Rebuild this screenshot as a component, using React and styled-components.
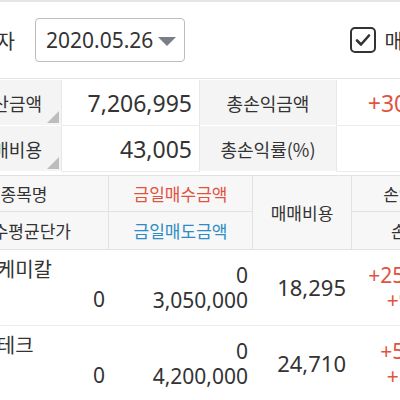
import styled, { createGlobalStyle } from "styled-components";

const Global = createGlobalStyle`
  html, body { margin: 0; padding: 0; background: #fff; overflow: hidden; }
  body { font-family: "Noto Sans", "Noto Sans CJK KR", sans-serif; color: #333; }
`;

const RED = "#e2533f";
const BLUE = "#2c8cc6";
const KR = `"Noto Sans CJK KR", "Noto Sans", sans-serif`;

const Page = styled.div`
  width: 540px;
  margin-left: -60px;
  border-top: 2px solid #e6e6e6;
`;

const Toolbar = styled.div`
  height: 76px;
  display: flex;
  align-items: center;
  border-bottom: 1px solid #e4e4e4;
  padding-left: 38px;
`;

const ToolLabel = styled.span`
  font-size: 20px;
  width: 57px;
`;

const DateSelect = styled.div`
  width: 150px;
  height: 44px;
  box-sizing: border-box;
  border: 1px solid #bdbdbd;
  border-radius: 4px;
  display: flex;
  align-items: center;
  padding-left: 10px;
  font-size: 21px;
  gap: 5px;
`;

const Caret = styled.span`
  width: 0;
  height: 0;
  border-left: 9px solid transparent;
  border-right: 9px solid transparent;
  border-top: 9px solid #7a7f87;
  margin-top: 2px;
`;

const CheckWrap = styled.label`
  margin-left: auto;
  margin-right: 22px;
  display: flex;
  align-items: center;
  gap: 8px;
  font-size: 20px;
`;

const CheckBox = styled.span`
  width: 26px;
  height: 26px;
  box-sizing: border-box;
  border: 2px solid #333;
  border-radius: 5px;
  display: flex;
  align-items: center;
  justify-content: center;
`;

const Summary = styled.div`
  display: grid;
  grid-template-columns: 122px 138px 137px 137px;
  margin-top: 1px;
`;

const SumLabel = styled.div`
  position: relative;
  background: #f4f4f4;
  height: 45px;
  display: flex;
  align-items: center;
  justify-content: ${(p) => (p.$right ? "flex-end" : "center")};
  padding-right: ${(p) => (p.$right ? "19px" : "0")};
  font-family: ${KR};
  font-size: 18px;
  border-bottom: 1px solid #fff;
  border-right: 1px solid #e8e8e8;
  ${(p) =>
    p.$corner &&
    `&::after {
      content: "";
      position: absolute;
      right: 2px;
      bottom: 2px;
      border-left: 12px solid transparent;
      border-bottom: 12px solid #bdbdbd;
    }`}
`;

const SumValue = styled.div`
  height: 45px;
  display: flex;
  align-items: center;
  justify-content: flex-end;
  padding-right: 7px;
  font-size: 23px;
  color: ${(p) => p.$color || "#333"};
  border-bottom: 1px solid #ececec;
  border-right: 1px solid #e8e8e8;
`;

const Table = styled.div`
  margin-top: 3px;
`;

const Head = styled.div`
  display: grid;
  grid-template-columns: 169px 144px 99px 126px;
  grid-template-rows: 36px 37px;
  background: #f7f7f7;
  border-top: 1px solid #e2e2e2;
  border-bottom: 1px solid #e2e2e2;
`;

const HeadCell = styled.div`
  display: flex;
  align-items: center;
  justify-content: center;
  font-family: ${KR};
  font-size: 17px;
  color: ${(p) => p.$color || "#333"};
  border-right: 1px solid #e2e2e2;
  border-bottom: ${(p) => (p.$top ? "1px solid #e2e2e2" : "none")};
  grid-column: ${(p) => p.$col};
  grid-row: ${(p) => p.$row};
`;

const Row = styled.div`
  display: grid;
  grid-template-columns: 169px 144px 99px 126px;
  height: 75px;
  border-bottom: 1px solid #ececec;
`;

const Cell = styled.div`
  display: flex;
  flex-direction: column;
  justify-content: center;
  align-items: flex-end;
  padding: 0 ${(p) => p.$pad || "5px"} 0 5px;
  font-size: ${(p) => p.$size || "21px"};
  line-height: 25px;
  color: ${(p) => p.$color || "#333"};
`;

const NameCell = styled.div`
  padding: 7px 4px 0 20px;
  display: flex;
  flex-direction: column;
  font-size: 20px;
  line-height: 25px;
`;

const Name = styled.span`
  align-self: flex-start;
`;

const Avg = styled.span`
  align-self: flex-end;
  margin-top: 5px;
  font-size: 21px;
`;

const rows = [
  { name: "롯데케미칼", avg: "0", buy: "0", sell: "3,050,000", fee: "18,295", pl: "+253,705", rate: "+9.07%" },
  { name: "삼성테크", avg: "0", buy: "0", sell: "4,200,000", fee: "24,710", pl: "+50,290", rate: "+1.21%" },
];

export default function App() {
  return (
    <Page>
      <Global />
      <Toolbar>
        <ToolLabel>일자</ToolLabel>
        <DateSelect>
          2020.05.26
          <Caret />
        </DateSelect>
        <CheckWrap>
          <CheckBox>
            <svg width="16" height="14" viewBox="0 0 16 14">
              <path d="M2 7.5 L6 11.5 L14 2.5" fill="none" stroke="#333" strokeWidth="2.6" strokeLinecap="round" strokeLinejoin="round" />
            </svg>
          </CheckBox>
          매도포함
        </CheckWrap>
      </Toolbar>

      <Summary>
        <SumLabel $right $corner>추정자산금액</SumLabel>
        <SumValue>7,206,995</SumValue>
        <SumLabel>총손익금액</SumLabel>
        <SumValue $color={RED}>+303,995</SumValue>
        <SumLabel $right $corner>총매매비용</SumLabel>
        <SumValue>43,005</SumValue>
        <SumLabel>총손익률(%)</SumLabel>
        <SumValue $color={RED}>+4.41</SumValue>
      </Summary>

      <Table>
        <Head>
          <HeadCell $top $col="1" $row="1">종목명</HeadCell>
          <HeadCell $top $col="2" $row="1" $color={RED}>금일매수금액</HeadCell>
          <HeadCell $col="3" $row="1 / span 2">매매비용</HeadCell>
          <HeadCell $top $col="4" $row="1">손익금액</HeadCell>
          <HeadCell $col="1" $row="2">매수평균단가</HeadCell>
          <HeadCell $col="2" $row="2" $color={BLUE}>금일매도금액</HeadCell>
          <HeadCell $col="4" $row="2">손익률</HeadCell>
        </Head>
        {rows.map((r) => (
          <Row key={r.name}>
            <NameCell>
              <Name>{r.name}</Name>
              <Avg>{r.avg}</Avg>
            </NameCell>
            <Cell>
              <span>{r.buy}</span>
              <span>{r.sell}</span>
            </Cell>
            <Cell $pad="6px" $size="22px">{r.fee}</Cell>
            <Cell $color={RED} $pad="20px">
              <span>{r.pl}</span>
              <span>{r.rate}</span>
            </Cell>
          </Row>
        ))}
      </Table>
    </Page>
  );
}
